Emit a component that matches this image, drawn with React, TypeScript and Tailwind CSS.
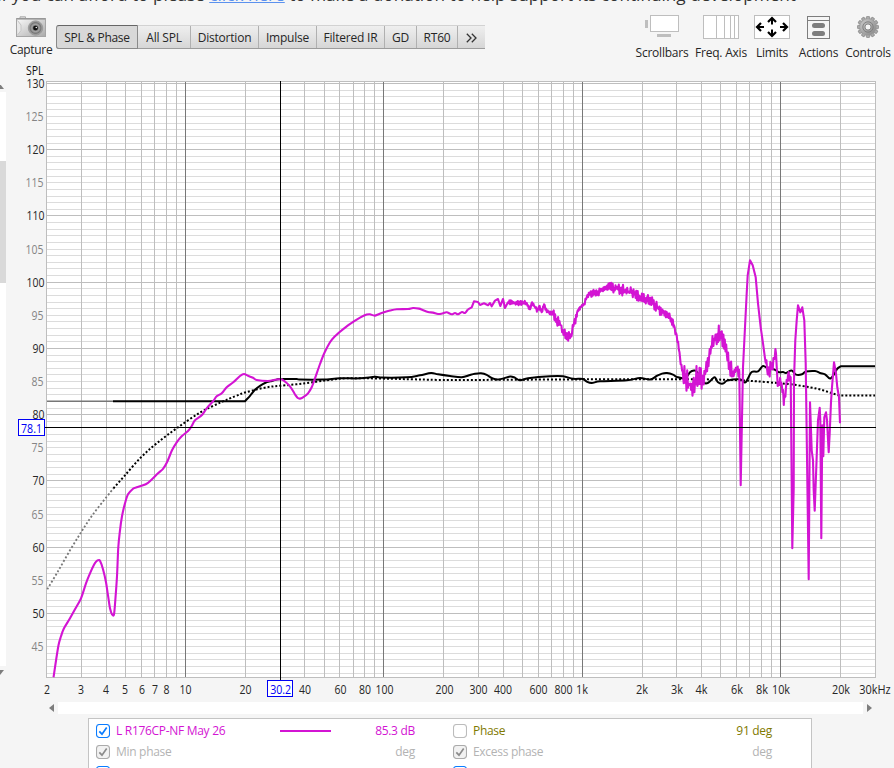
import type { ReactNode } from "react";

type Point = [number, number];

const MAGENTA = "#d314d3";

const frequencyX = (f: number) => Math.round(185 + 198.4 * Math.log10(f / 10));
const splY = (db: number) => Math.round(82.98 + (130 - db) * 6.625);

const response: Point[] = [
    [53.5, 677], [55, 667], [58.5, 645], [61, 636], [64, 628], [70, 618], [75, 609], [81, 598], [86, 583], [90, 573], [94, 564.5],
    [96, 561.5], [98, 560], [100, 560.5], [103, 569], [106, 582], [108, 595], [110, 608], [112, 614], [114, 614], [115.3, 600],
    [117, 576], [118.3, 547], [120, 530], [122, 516], [125, 503], [128, 494], [133, 488.5], [136.7, 487], [143, 485], [148, 482.5],
    [153, 478], [158, 473], [163, 468.5], [167, 462], [172, 450], [176.7, 442], [181.7, 436], [188, 430.7], [191.7, 425.7],
    [195, 420], [201.7, 415], [206.7, 408], [213, 401], [216.7, 396], [221.7, 393], [226.7, 387], [233.3, 382], [240, 375.7],
    [244, 373.7], [248, 375.5], [253, 377.5], [256.7, 379.7], [268, 380.7], [275, 379.5], [281, 379], [285, 381.3], [290, 386],
    [295, 394], [297.5, 397.5], [300, 398.3], [303, 397], [308, 393], [311.7, 387], [315, 378], [320, 363.7], [324.7, 352],
    [330, 342], [335, 336], [339.7, 331.7], [346.7, 326], [353, 321.7], [360, 317.3], [366.7, 314.3], [370, 314], [375, 315.3],
    [381.7, 312.7], [390, 310.3], [396.7, 309], [408, 308.7], [413, 307.7], [419, 308.3], [422.7, 309.7], [428, 311.7],
    [433, 312.3], [438, 313.7], [443, 313], [446.7, 312], [451.7, 314], [455, 312.7], [458, 314], [462, 311.7], [465, 312.7],
    [468, 309], [471.7, 307], [474, 301], [478, 301.7], [480, 304.7], [484, 303], [488, 305], [490, 302.7], [491.7, 306],
    [495, 300.3], [498, 298.7], [500.3, 305.7], [503, 298.7], [505, 307.7], [508, 302], [526, 303], [530, 309], [532, 302],
    [537, 310], [539, 306], [541.7, 312], [544, 304], [547, 311], [550, 311.7], [553, 313], [556.7, 320], [560.7, 325], [564, 333],
    [569.3, 337], [572, 333], [574, 323], [577, 312.7], [580, 306.7], [584, 304.3], [586.7, 297], [590, 292.7], [598, 292.7],
    [605.7, 286.5], [616.7, 288.3], [630, 292], [643, 297.7], [653, 302.7], [661.7, 311], [670, 317], [674, 325], [676.7, 335],
    [680, 357], [683, 374], [689, 384], [693, 384], [696.7, 378], [703, 380], [705.7, 371.7], [709, 358], [712.7, 341.7],
    [716, 338], [719, 333], [722.7, 340], [726.7, 352], [729, 363], [733, 376], [737, 368], [739.3, 372], [740.7, 485],
    [743, 367], [745, 327], [746.7, 293], [747.7, 275], [750, 260], [752.7, 265], [755.7, 277], [758, 303], [760.7, 327],
    [763, 343], [765, 358], [767, 368], [769, 373], [772, 365], [774, 358], [776, 353], [777, 372], [778, 385], [781, 382],
    [784, 400], [786, 387], [788, 375], [790.7, 377], [792.3, 548], [793.7, 488], [794, 380], [795.3, 340], [796.7, 320],
    [798, 305], [800.3, 312], [802.3, 307], [804.3, 320], [805.7, 363], [806.5, 420], [808.7, 579], [810, 402], [811.7, 450],
    [813, 460], [813.7, 490], [814.7, 510.5], [816.3, 467], [818, 420], [819.7, 407.5], [820.3, 420], [821.3, 538], [822.3, 425],
    [823.3, 456], [824.3, 417], [826, 412], [827, 420], [828.7, 452], [829.7, 433], [831, 402], [832, 387], [834, 362], [836, 373],
    [837.3, 387], [839, 397], [840, 423],
];

// [from, to, amplitude] of the measurement noise along the x axis
const noiseBands = [
    [508, 552, 2.5], [552, 575, 5], [575, 587, 2.5], [587, 600, 4.5], [600, 660, 5.5], [660, 674, 4], [674, 683, 4],
    [683, 705, 13], [705, 733, 9], [733, 739, 6], [765, 776, 8], [777, 791, 6],
];

function addNoise(points: Point[]): Point[] {
    const out: Point[] = [];
    let n = 0;
    points.forEach(([x, y], i) => {
        out.push([x, y]);
        const next = points[i + 1];
        const band = noiseBands.find(b => x >= b[0] && x < b[1]);
        if (!next || !band || Math.abs(next[1] - y) > 60) return;
        for (let px = x + 0.7; px < next[0]; px += 0.7) {
            n++;
            const h = Math.sin(n * 127.1) * 43758.5453;
            const r = h - Math.floor(h);
            const t = (px - x) / (next[0] - x);
            const side = n % 2 ? 1 : -1;
            out.push([px, y + (next[1] - y) * t + side * r * band[2]]);
        }
    });
    return out;
}

const target: Point[] = [
    [245, 401], [250, 395.5], [255, 389.5], [260, 385.5], [265, 382.7], [271.7, 380.7], [278, 379], [283, 378.7],
    [296.7, 378.7], [300, 379.3], [323, 379.3], [340, 378], [360, 378], [375, 376.5], [381.7, 377.3], [406.7, 377], [420, 375],
    [431, 372.8], [438, 374], [450, 375.7], [461.7, 377], [470, 374.7], [475, 373.5], [481, 373], [486.7, 374.5], [491.7, 377.7],
    [498, 379.3], [510, 376.3], [514, 377], [520, 380], [528, 378], [550, 376], [563, 376], [573, 378.5], [583, 378.7],
    [586.7, 381.3], [591.7, 382.7], [600, 381], [626.7, 380], [640, 377.7], [650, 379.3], [656.7, 375.7], [662, 373.3], [667, 372.7],
    [673, 374.3], [677, 376.7], [685, 378], [690, 372], [694, 370.3], [697, 371.7], [703, 381.7], [707, 383], [711, 380],
    [714.7, 377], [718, 382], [723, 383.3], [727, 380.3], [740, 379], [745, 382.3], [748, 378], [751.7, 371.7], [758, 371],
    [763, 365.7], [768, 368.3], [773, 368.7], [777, 370.7], [779, 372], [783, 371.7], [786, 372.7], [791.7, 370.3], [796, 374.3],
    [802, 374], [805.7, 371.3], [815, 370.7], [820, 372.7], [825, 374], [830, 378.3], [834, 374], [837, 368.7], [840.7, 366],
];

const dottedLow: Point[] = [[47.3, 589], [58, 571], [70, 550], [81.7, 531], [93, 514], [106.7, 496.5], [113.5, 488]];
const dotted: Point[] = [
    [113.5, 488], [125, 475], [141, 457], [156.7, 443], [176.7, 428], [200, 412.3], [221, 402], [235, 396], [246.7, 391.7],
    [266.7, 387], [280, 385.5], [303, 383.3], [326.7, 380], [346.7, 378], [383, 378.3], [413, 379], [450, 379.7], [600, 379],
    [700, 379], [740, 380], [756.7, 381], [776.7, 382.7], [793, 384.3], [810, 387], [823, 390], [833, 393.3], [840, 395.3],
];

const toPoints = (points: Point[]) => points.map(p => p[0].toFixed(1) + "," + p[1].toFixed(1)).join(" ");

// Catmull-Rom spline through the points
function smoothPath(points: Point[]) {
    let d = `M${points[0][0]} ${points[0][1]}`;
    for (let i = 0; i < points.length - 1; i++) {
        const a = points[i - 1] ?? points[i];
        const b = points[i];
        const c = points[i + 1];
        const e = points[i + 2] ?? c;
        const x1 = b[0] + Math.min((c[0] - a[0]) / 6, (c[0] - b[0]) / 2);
        const x2 = c[0] - Math.min((e[0] - b[0]) / 6, (c[0] - b[0]) / 2);
        const y1 = b[1] + (c[1] - a[1]) / (c[0] - a[0]) * (x1 - b[0]);
        const y2 = c[1] - (e[1] - b[1]) / (e[0] - b[0]) * (c[0] - x2);
        d += `C${x1.toFixed(1)} ${y1.toFixed(1)} ${x2.toFixed(1)} ${y2.toFixed(1)} ${c[0]} ${c[1]}`;
    }
    return d;
}

const smoothResponse = response.filter(p => p[0] <= 468);
const roughResponse = response.filter(p => p[0] >= 468);

const frequencies = [1, 10, 100, 1000, 10000]
    .flatMap(decade => [1, 2, 3, 4, 5, 6, 7, 8, 9].map(n => n * decade))
    .filter(f => f > 2 && f < 30000);

const levels = Array.from({ length: 90 }, (_, i) => 130 - i);

const frequencyLabels: [string, number][] = [
    ["2", 47], ["3", 81], ["4", 106], ["5", 125], ["6", 142], ["7", 155], ["8", 166.5], ["10", 185.5], ["20", 245.5], ["40", 305],
    ["60", 340.5], ["80", 365], ["100", 384.5], ["200", 444.5], ["300", 478.5], ["400", 503], ["600", 538.5], ["800", 563.5],
    ["1k", 582], ["2k", 642], ["3k", 677], ["4k", 701.5], ["6k", 737], ["8k", 762], ["10k", 781], ["20k", 841], ["30kHz", 875],
];

const labelWidth = (s: string) => (s === "30kHz" ? 31.5 : s.length * 6 + (s.includes(".") ? -3 : 0));

function AxisLabel({ text, x, y, fill = "#262626", anchor = "middle" }: { text: string, x: number, y: number, fill?: string, anchor?: "middle" | "end" }) {
    return (
        <text x={x} y={y} fill={fill} textAnchor={anchor} textLength={labelWidth(text)} lengthAdjust="spacingAndGlyphs" className="text-[12px]">{text}</text>
    )
}

function Chart() {
    return (
        <svg width="888" height="638" viewBox="6 62 888 638" className="block">
            <text x="26" y="75" fill="#111" textLength="17.5" lengthAdjust="spacingAndGlyphs" className="text-[12px]">SPL</text>
            <rect x="46" y="81" width="830" height="597" fill="#fff" />
            <g shapeRendering="crispEdges">
                {levels.map(db => <rect key={db} x="46" y={splY(db)} width="830" height="1" fill={db % 10 ? "#dcdcdc" : "#bebebe"} />)}
                {frequencies.map(f => (
                    <rect key={f} x={frequencyX(f)} y="81" width="1" height="597" fill={Math.log10(f) % 1 ? "#bebebe" : "#787878"} />
                ))}
                <rect x="46.5" y="81.5" width="829" height="596" fill="none" stroke="#bebebe" />
            </g>
            {levels.filter(db => db % 5 === 0 && db > 40).map(db => (
                <AxisLabel key={db} text={String(db)} x={db % 10 ? 43.5 : 44.5} y={splY(db) + 5} anchor="end" fill={db % 10 ? "#858585" : "#262626"} />
            ))}
            {frequencyLabels.map(([text, x]) => <AxisLabel key={text} text={text} x={x} y={694} />)}
            <g fill="none" strokeLinejoin="round" transform="translate(0 .3)">
                <path d="M47 401H113" stroke="#777" strokeWidth="1.6" />
                <path d={smoothPath(dottedLow)} stroke="#777" strokeWidth="1.8" strokeDasharray="2 2" />
                <path d={smoothPath(dotted) + "H875"} stroke="#000" strokeWidth="2" strokeDasharray="2 2" />
                <path d={"M113 401H245" + smoothPath(target).replace("M", "L") + "H875"} stroke="#000" strokeWidth="2" />
                <path d={smoothPath(smoothResponse)} stroke={MAGENTA} strokeWidth="2.1" />
                <polyline points={toPoints(addNoise(roughResponse))} stroke={MAGENTA} strokeWidth="2.1" />
            </g>
            <g shapeRendering="crispEdges">
                <rect x="280" y="81" width="1" height="599" fill="#000" />
                <rect x="44" y="427" width="832" height="1" fill="#000" />
                <rect x="267.5" y="680.5" width="25" height="16" fill="#fff" stroke="#0000f5" />
                <rect x="18.5" y="419.5" width="26" height="16" fill="#fff" stroke="#0000f5" />
            </g>
            <AxisLabel text="30.2" x={280.7} y={693.5} fill="#0000f5" />
            <AxisLabel text="78.1" x={31.5} y={432.5} fill="#0000f5" />
        </svg>
    )
}

const tabs: [string, string][] = [
    ["SPL & Phase", "w-[82px]"], ["All SPL", "w-[53px]"], ["Distortion", "w-[68px]"], ["Impulse", "w-[58px]"],
    ["Filtered IR", "w-[68px]"], ["GD", "w-[32px]"], ["RT60", "w-[41px]"],
];

function Tabs() {
    return (
        <div className="mt-[11px] ml-1 flex h-6 rounded-l-[3px] border-t border-b border-t-[#d2d2d2] border-b-[#9c9c9c] bg-linear-to-b from-[#efefef] to-[#d6d6d6]">
            {tabs.map(([label, width], i) => (
                <button key={label} className={i === 0
                    ? `${width} -my-px rounded-l-[3px] border border-[#8a8a8a] border-t-[#666] bg-[#d8d8d8] pt-[2px] text-center tracking-[-0.3px]`
                    : `${width} border-r border-[#b0b0b0] pt-[2px] text-center tracking-[-0.2px]`}>
                    {label}
                </button>
            ))}
            <button className="flex w-[27px] items-center justify-center pt-px">
                <svg width="11" height="10" viewBox="0 0 11 10" fill="none" stroke="#333" strokeWidth="1.3"><path d="M.8.8 5 5 .8 9.2M5.8.8 10 5 5.8 9.2" /></svg>
            </button>
        </div>
    )
}

function CameraIcon() {
    return (
        <svg width="31" height="22" viewBox="0 0 31 22">
            <defs>
                <linearGradient id="body" x1="0" y1="0" x2="1" y2="1">
                    <stop offset="0" stopColor="#fafafa" />
                    <stop offset="1" stopColor="#aaa" />
                </linearGradient>
                <radialGradient id="lens">
                    <stop offset=".2" stopColor="#444" />
                    <stop offset=".5" stopColor="#a5a5a5" />
                    <stop offset=".75" stopColor="#777" />
                    <stop offset="1" stopColor="#bbb" />
                </radialGradient>
            </defs>
            <path d="M4 2V.8h5.5V2" fill="#ddd" stroke="#aaa" />
            <rect x=".5" y="2.5" width="29" height="18" fill="url(#body)" stroke="#a5a5a5" />
            <path d="M1.5 4 5 9v5l-3.500 5z" fill="#e9e9e9" />
            <path d="M1 3h28" stroke="#888" />
            <path d="M1.500 4.500 5 9v5.500l-3.500 4.500" fill="none" stroke="#c5c5c5" />
            <circle cx="19.500" cy="12" r="7.200" fill="url(#lens)" stroke="#888" strokeWidth=".7" />
            <circle cx="19.500" cy="12" r="2.300" fill="#111" />
            <circle cx="20.300" cy="11.500" r=".8" fill="#eee" />
        </svg>
    )
}

function ScrollbarsIcon() {
    return (
        <svg width="34" height="24" viewBox="0 0 34 24">
            <rect x="0" y="5" width="3" height="8" fill="#bebebe" />
            <rect x="5.500" y=".5" width="28" height="16" fill="#fff" stroke="#bebebe" />
            <rect x="12" y="19" width="14" height="3" fill="#bebebe" />
        </svg>
    )
}

function FreqAxisIcon() {
    return (
        <svg width="36" height="24" viewBox="0 0 36 24">
            <rect x=".5" y=".5" width="35" height="23" fill="#fff" stroke="#bebebe" />
            <path d="M13.500 0V24M21.500 0V24M27.500 0V24M31.500 0V24" stroke="#bebebe" />
        </svg>
    )
}

function LimitsIcon() {
    return (
        <svg width="36" height="24" viewBox="0 0 36 24" fill="none">
            <rect x=".5" y=".5" width="35" height="23" fill="#fff" stroke="#bebebe" />
            <path d="M18 9.500V3.500M18 14.500V20.500M10 12H3M26 12H33" stroke="#000" strokeWidth="2" />
            <path d="m14 7 4-4 4 4M14 17l4 4 4-4M7 8l-4 4 4 4M29 8l4 4-4 4" stroke="#000" strokeWidth="2.200" />
        </svg>
    )
}

function ActionsIcon() {
    return (
        <svg width="23" height="23" viewBox="0 0 23 23">
            <rect x=".5" y=".5" width="22" height="22" fill="#f5f5f5" stroke="#7d7d7d" />
            <path d="M0 4.500H23" stroke="#7d7d7d" />
            <rect x="5" y="7" width="13" height="5" rx="2.500" fill="#7d7d7d" />
            <rect x="5" y="15" width="13" height="5" rx="2.500" fill="#7d7d7d" />
        </svg>
    )
}

function GearIcon() {
    const teeth = Array.from({ length: 12 }, (_, i) => i * 30);
    return (
        <svg width="22" height="22" viewBox="0 0 22 22">
            <defs>
                <linearGradient id="gear" x1="0" y1="0" x2="1" y2="1">
                    <stop offset="0" stopColor="#ccc" />
                    <stop offset="1" stopColor="#858585" />
                </linearGradient>
            </defs>
            {teeth.map(a => <rect key={a} x="9.300" y=".3" width="3.400" height="5" rx="1.200" fill="#aaa" stroke="#777" strokeWidth=".6" transform={`rotate(${a} 11 11)`} />)}
            <circle cx="11" cy="11" r="8.200" fill="url(#gear)" stroke="#999" strokeWidth=".5" />
            <circle cx="11" cy="11" r="5.200" fill="none" stroke="#777" strokeWidth=".8" />
            <circle cx="11" cy="11" r="3" fill="#f5f5f5" stroke="#777" strokeWidth=".8" />
        </svg>
    )
}

function ToolButton({ label, width, children }: { label: string, width: string, children: ReactNode }) {
    return (
        <button className={`${width} flex shrink-0 flex-col items-center`}>
            <span className="flex h-6 items-center">{children}</span>
            <span className="mt-[6px] whitespace-nowrap leading-4 tracking-[-0.22px]">{label}</span>
        </button>
    )
}

function Toolbar() {
    return (
        <div className="flex h-12 items-start">
            <button className="ml-[8px] mt-[2px] flex w-[46px] flex-col items-center">
                <CameraIcon />
                <span className="mt-1 leading-4 tracking-[-0.3px]">Capture</span>
            </button>
            <div className="-ml-[2px]"><Tabs /></div>
            <div className="mt-[1px] mr-px ml-auto flex">
                <ToolButton label="Scrollbars" width="w-[60px]"><ScrollbarsIcon /></ToolButton>
                <ToolButton label="Freq. Axis" width="w-[58px]"><FreqAxisIcon /></ToolButton>
                <ToolButton label="Limits" width="w-[44px]"><LimitsIcon /></ToolButton>
                <ToolButton label="Actions" width="w-[49px]"><ActionsIcon /></ToolButton>
                <ToolButton label="Controls" width="w-[50px]"><GearIcon /></ToolButton>
            </div>
        </div>
    )
}

function Checkbox({ state }: { state: "on" | "off" | "disabled" }) {
    const border = state === "on" ? "#0a7cff" : state === "off" ? "#bcbcbc" : "#ababab";
    return (
        <svg width="14" height="14" viewBox="0 0 14 14" fill="none" className="shrink-0">
            <rect x=".5" y=".5" width="13" height="13" rx="3" stroke={border} fill={state === "disabled" ? "#f2f2f2" : "#fff"} strokeWidth="1.100" />
            {state !== "off" && <path d="m3.300 7.300 2.700 2.900 4.700-6.700" stroke={state === "on" ? "#0a7cff" : "#8b8b8b"} strokeWidth="1.700" />}
        </svg>
    )
}

function LegendRow({ left, right, color, rightColor, value, rightValue, leftState, rightState, line }: {
    left: string, right: string, color: string, rightColor: string, value: string, rightValue: string,
    leftState: "on" | "disabled", rightState: "on" | "off" | "disabled", line?: boolean
}) {
    return (
        <div className="flex h-[21px] items-center tracking-[-0.3px]">
            <Checkbox state={leftState} />
            <span className={`${color} ml-[6px] w-[164px]`}>{left}</span>
            <span className={`h-[2px] w-[51px] ${line ? "bg-[#d314d3]" : ""}`} />
            <span className={`${color} w-[84px] text-right`}>{value}</span>
            <span className="w-[38px]" />
            <Checkbox state={rightState} />
            <span className={`${rightColor} ml-[6px] w-[160px]`}>{right}</span>
            <span className={`${rightColor} w-[139px] text-right`}>{rightValue}</span>
        </div>
    )
}

export default function App() {
    return (
        <div className="h-[768px] w-[894px] overflow-hidden bg-[#f5f5f5] font-['Open_Sans',sans-serif] text-[12px] text-[#262626]">
            <div className="flex h-[14px] w-[796px] items-end justify-end">
                <p className="mb-[7px] whitespace-pre text-[17.2px] leading-6 text-[#333]">
                    if you can afford to please <a className="text-[#5b91ee] underline">click here</a> to make a donation to help support its continuing development
                </p>
            </div>
            <Toolbar />
            <div className="flex">
                <div className="flex w-[6px] flex-col pt-[23px]">
                    <svg width="6" height="7" viewBox="0 0 6 7"><path d="M-3 4 0-1l4 5z" fill="#7d7d7d" /></svg>
                    <div className="h-[574px] bg-white pt-[69px]">
                        <div className="h-[122px] bg-[#d9d9d9]" />
                    </div>
                    <svg width="6" height="9" viewBox="0 0 6 9"><path d="M-4 4H4L0 9z" fill="#7d7d7d" /></svg>
                </div>
                <Chart />
            </div>
            <div className="mt-[2px] ml-[49px] flex h-3 w-[823px] items-center justify-between">
                <svg width="5" height="8" viewBox="0 0 5 8"><path d="M5 0v8L0 4z" fill="#7d7d7d" /></svg>
                <div className="ml-[4px] mr-[4px] h-3 grow bg-white" />
                <svg width="5" height="8" viewBox="0 0 5 8"><path d="M0 0v8l5-4z" fill="#7d7d7d" /></svg>
            </div>
            <div className="mt-1 ml-[88px] h-[80px] w-[724px] border border-[#c4c4c4] bg-white pt-[1px] pl-[7px]">
                <LegendRow left="L R176CP-NF May 26" right="Phase" color="text-[#d314d3]" rightColor="text-[#7f7a00]" value="85.3 dB" rightValue="91 deg" leftState="on" rightState="off" line />
                <LegendRow left="Min phase" right="Excess phase" color="text-[#b3b3b3]" rightColor="text-[#b3b3b3]" value="deg" rightValue="deg" leftState="disabled" rightState="disabled" />
                <LegendRow left="" right="" color="" rightColor="" value="" rightValue="" leftState="on" rightState="on" />
            </div>
        </div>
    )
}
